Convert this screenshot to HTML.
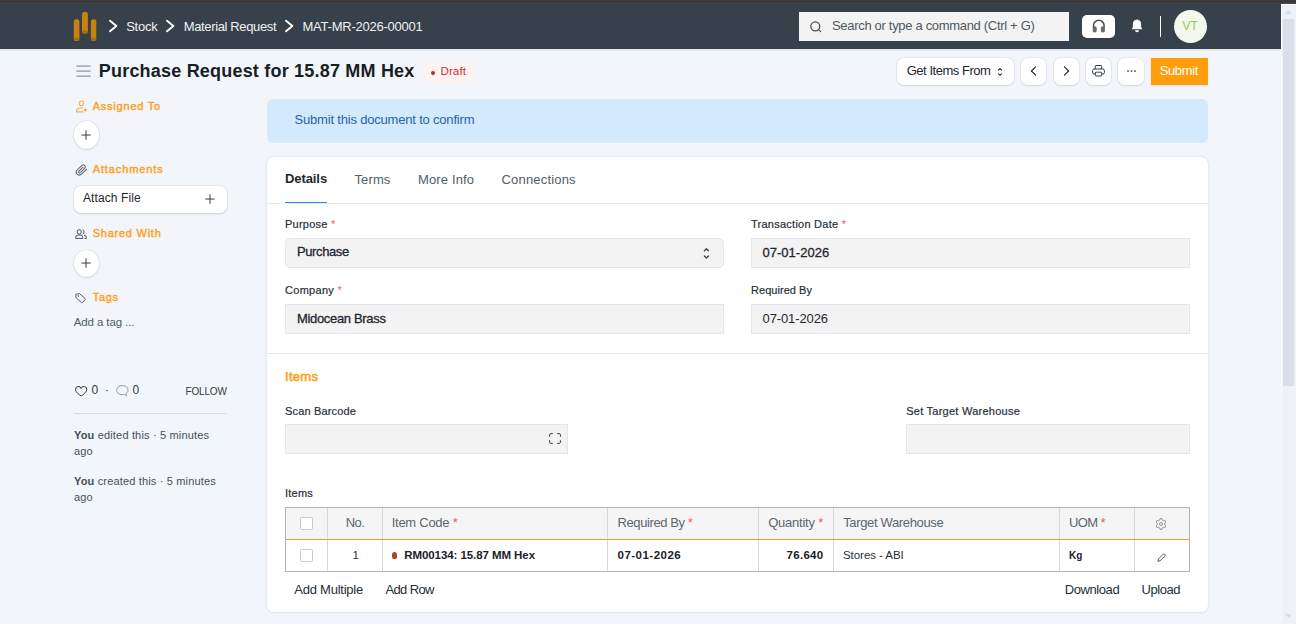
<!DOCTYPE html>
<html lang="en">
<head>
<meta charset="utf-8">
<title>Purchase Request for 15.87 MM Hex - MAT-MR-2026-00001</title>
<style>
*{box-sizing:border-box;margin:0;padding:0}
html,body{width:1296px;height:624px;overflow:hidden}
body{position:relative;background:#f2f5fa;font-family:"Liberation Sans",sans-serif;font-size:13px;color:#1f272e;-webkit-font-smoothing:antialiased}
.abs,.t{position:absolute}
.t{white-space:nowrap;line-height:1;display:block}
svg{position:absolute;overflow:visible}
/* chrome */
#chrome{left:0;top:0;width:1296px;height:3px;background:#3b3b3b}
#chrome2{left:0;top:3px;width:1296px;height:1px;background:#454647}
/* navbar */
#nav{left:0;top:4px;width:1281px;height:45px;background:#36414c;box-shadow:0 1px 2px rgba(20,30,50,.10)}
#nav .t{color:#eef0f2;font-size:13px}
#search{left:799px;top:8px;width:270px;height:29px;background:#f3f3f3}
#search .t{color:#4f5861;font-size:13px}
#help{left:1082px;top:11px;width:33px;height:23px;background:#fff;border-radius:5px}
#vdiv{left:1160px;top:12px;width:1px;height:21px;background:#fff}
#avatar{left:1174px;top:6px;width:33px;height:33px;border-radius:50%;background:#f2f8ec}
#avatar .t{color:#8fcb5c;font-size:12.5px}
/* scrollbar */
#sb{left:1281px;top:4px;width:15px;height:620px;background:#eef1f6;border-left:1px solid #f8fafc;border-top:1px solid #fbfcfd}
#thumb{left:1283px;top:19px;width:11px;height:367px;background:#d9dfe8}
/* page head */
#title{left:98.8px;top:62px;font-size:18px;font-weight:700;color:#171e26}
#pill{left:422px;top:62px;width:53px;height:21px;border-radius:6px;background:#fff3f2}
#pill i{position:absolute;left:9px;top:9px;width:4px;height:4px;border-radius:50%;background:#c5261b}
#pill .t{color:#c93434;font-size:11.5px}
.btn{background:#fff;border-radius:7px;box-shadow:0 0 0 1px rgba(20,40,70,.05),0 1px 2px rgba(20,40,70,.09)}
#submit{left:1151px;top:58px;width:57px;height:27px;background:#ff9d0b;box-shadow:0 1px 2px rgba(0,0,0,.07)}
#submit .t{color:#fff;font-size:13px}
/* sidebar */
.sh{color:#ff9f1c;font-size:11px;font-weight:400;-webkit-text-stroke:.4px #ff9f1c}
.circ{width:25.6px;height:27.4px;border-radius:50%;background:#fff;box-shadow:0 0 0 .6px rgba(20,40,70,.10),0 1px 2.5px rgba(20,40,70,.10)}
#attach{left:74px;top:185.5px;width:152.5px;height:27px;background:#fff;border-radius:7px;box-shadow:0 0 0 1px rgba(20,40,70,.06),0 1px 2px rgba(20,40,70,.12)}
.side{font-size:12px;color:#333c45}
#e1,#e2{color:#46505a}
/* alert */
#alert{left:267px;top:99px;width:941px;height:43.5px;background:#d3e9fc;border-radius:6px}
#alert .t{color:#1e66ad;font-size:13px}
/* card */
#card{left:267px;top:157px;width:941px;height:455px;background:#fff;border-radius:7px;box-shadow:0 0 3px rgba(40,60,100,.13),0 1px 2px rgba(40,60,100,.04)}
.hl{height:1px;background:#e6ebf2}
.tab{font-size:13px;color:#525d68}
.lbl{font-size:11px;color:#272f38;-webkit-text-stroke:.2px #272f38}
.inp{background:#f3f3f3;border:1px solid #e1e6ef;height:30px}
.val{font-size:13px;color:#1f272e}
/* grid */
#grid{left:285px;top:507px;width:905px;height:65px;border:1px solid #b3b3b3;background:#fff}
#ghead{left:0;top:0;width:903px;height:32px;background:#f5f5f5}
#gline{left:0;top:31px;width:903px;height:1.3px;background:#ff9f1c}
.cb{width:13px;height:12.6px;background:#fff;border:1px solid #c6cbd2;border-radius:1.5px}
.vl{top:0;width:1px;height:63px;background:#d5dae1}
.gh{font-size:13px;color:#5c6670}
.gv{font-size:11.5px;color:#1a2129;font-weight:700}
.ga{font-size:13px;color:#272f38}
.req{color:#ec5b5f;-webkit-text-stroke:0}
.med{font-weight:400;-webkit-text-stroke:.3px currentColor}
</style>
</head>
<body>
<div id="chrome" class="abs"></div><div id="chrome2" class="abs"></div>

<header id="nav" class="abs">
  <svg id="logo" style="left:73px;top:7px" width="24" height="31" viewBox="0 0 24 31">
    <rect x="0.8" y="8.3" width="5.6" height="21.7" rx="2.6" fill="#c9820f"/>
    <rect x="9" y="0.8" width="5.9" height="22" rx="2.7" fill="#c9820f"/>
    <rect x="17.9" y="8.3" width="5.4" height="21.7" rx="2.6" fill="#c9820f"/>
    <ellipse cx="3.6" cy="28.300" rx="2.700" ry="1.750" fill="#a96b10"/>
    <ellipse cx="11.95" cy="21.100" rx="2.850" ry="1.750" fill="#a96b10"/>
    <ellipse cx="20.6" cy="28.300" rx="2.600" ry="1.750" fill="#a96b10"/>
  </svg>
  <svg style="left:109px;top:16px" width="9" height="12" viewBox="0 0 9 12"><path d="M1 .7 L7.4 6 L1 11.3" fill="none" stroke="#fff" stroke-width="1.85" stroke-linecap="round" stroke-linejoin="round"/></svg>
  <a class="t" id="bc1" style="letter-spacing:-0.24px;left:126.2px;top:16px">Stock</a>
  <svg style="left:166px;top:16px" width="9" height="12" viewBox="0 0 9 12"><path d="M1 .7 L7.4 6 L1 11.3" fill="none" stroke="#fff" stroke-width="1.85" stroke-linecap="round" stroke-linejoin="round"/></svg>
  <a class="t" id="bc2" style="letter-spacing:-0.357px;left:183.7px;top:16px">Material Request</a>
  <svg style="left:285px;top:16px" width="9" height="12" viewBox="0 0 9 12"><path d="M1 .7 L7.4 6 L1 11.3" fill="none" stroke="#fff" stroke-width="1.85" stroke-linecap="round" stroke-linejoin="round"/></svg>
  <a class="t" id="bc3" style="letter-spacing:-0.235px;left:302.5px;top:16px">MAT-MR-2026-00001</a>

  <div id="search" class="abs">
    <svg style="left:11px;top:8.5px" width="12" height="12" viewBox="0 0 12 12"><circle cx="5.3" cy="5.3" r="4.5" fill="none" stroke="#454d56" stroke-width="1.25"/><path d="M8.6 8.6 L10.6 10.6" stroke="#454d56" stroke-width="1.25" stroke-linecap="round"/></svg>
    <span class="t" id="stext" style="letter-spacing:-0.314px;left:33.0px;top:7px">Search or type a command (Ctrl + G)</span>
  </div>
  <div id="help" class="abs">
    <svg style="left:9.8px;top:3.6px" width="13.6" height="14" viewBox="0 0 13.6 14"><path d="M1.5 9 V6.600 a5.300 5.300 0 0 1 10.600 0 V9" fill="none" stroke="#4d4d4d" stroke-width="1.5"/><rect x=".7" y="7.300" width="4" height="6.200" rx="1.800" fill="#6a6a6a"/><rect x="8.900" y="7.300" width="4" height="6.200" rx="1.800" fill="#6a6a6a"/></svg>
  </div>
  <svg id="bell" style="left:1131px;top:15.1px" width="12" height="14" viewBox="0 0 12 14"><path d="M6 .4 C3.2 .4 1.9 2.6 1.9 5 V8 L.6 10.2 H11.4 L10.1 8 V5 C10.1 2.6 8.8 .4 6 .4 Z" fill="#fff"/><path d="M4 11.300 a2 1.900 0 0 0 4 0 Z" fill="#fff"/></svg>
  <div id="vdiv" class="abs"></div>
  <div id="avatar" class="abs"><span class="t" id="vt" style="letter-spacing:-0.3px;left:8.3px;top:10px">VT</span></div>
</header>

<div id="sb" class="abs"></div>
<div id="thumb" class="abs"></div>
<svg style="left:1285px;top:10px" width="7" height="4" viewBox="0 0 7 4"><path d="M0 4 L3.5 0 L7 4 Z" fill="#d6dce7"/></svg>
<svg style="left:1285px;top:614px" width="7" height="4" viewBox="0 0 7 4"><path d="M0 0 L3.5 4 L7 0 Z" fill="#d6dce7"/></svg>

<!-- page head -->
<svg style="left:75.5px;top:65px" width="15" height="12" viewBox="0 0 15 12"><path d="M.3 1 H14.7 M.3 6 H14.7 M.3 11 H14.7" stroke="#8d98a5" stroke-width="1.25"/></svg>
<h1 class="t" id="title" style="letter-spacing:0.2px">Purchase Request for 15.87 MM Hex</h1>
<div id="pill" class="abs"><i></i><span class="t" id="draft" style="letter-spacing:0.12px;left:18.5px;top:3.5px">Draft</span></div>

<div class="abs btn" style="left:897px;top:58px;width:117px;height:27px">
  <span class="t val" id="gif" style="letter-spacing:-0.464px;left:9.7px;top:6.0px">Get Items From</span>
  <svg style="left:100px;top:8.5px" width="6" height="10" viewBox="0 0 6 10"><path d="M1.5 3 L3 1.6 L4.5 3 M1.5 6.800 L3 8.200 L4.500 6.800" fill="none" stroke="#1f272e" stroke-width="1.1" stroke-linecap="round" stroke-linejoin="round"/></svg>
</div>
<div class="abs btn" style="left:1021px;top:58px;width:25px;height:27px"><svg style="left:9px;top:7.8px" width="7" height="10" viewBox="0 0 7 10"><path d="M5.6 .8 L1.4 5 L5.6 9.2" fill="none" stroke="#1f272e" stroke-width="1.15" stroke-linecap="round" stroke-linejoin="round"/></svg></div>
<div class="abs btn" style="left:1054px;top:58px;width:25px;height:27px"><svg style="left:9px;top:7.8px" width="7" height="10" viewBox="0 0 7 10"><path d="M1.4 .8 L5.6 5 L1.4 9.2" fill="none" stroke="#1f272e" stroke-width="1.15" stroke-linecap="round" stroke-linejoin="round"/></svg></div>
<div class="abs btn" style="left:1086px;top:58px;width:25px;height:27px"><svg style="left:6px;top:7px" width="13" height="12" viewBox="0 0 13 12"><path d="M3.3 4 V1.2 a.7 .7 0 0 1 .7-.7 H9 a.7 .7 0 0 1 .7 .7 V4" fill="none" stroke="#333c45" stroke-width="1"/><rect x=".6" y="4" width="11.8" height="5" rx="1.6" fill="none" stroke="#333c45" stroke-width="1"/><rect x="3.3" y="7.2" width="6.4" height="3.8" rx=".8" fill="#fff" stroke="#333c45" stroke-width="1"/></svg></div>
<div class="abs btn" style="left:1118px;top:58px;width:26px;height:27px"><svg style="left:8.5px;top:11.7px" width="9" height="2" viewBox="0 0 9 2"><circle cx="1" cy="1" r=".85" fill="#1f272e"/><circle cx="4.5" cy="1" r=".85" fill="#1f272e"/><circle cx="8" cy="1" r=".85" fill="#1f272e"/></svg></div>
<button id="submit" class="abs" style="border:0"><span class="t" id="subt" style="letter-spacing:-0.367px;left:8.7px;top:6.0px">Submit</span></button>

<!-- sidebar -->
<aside>
  <svg style="left:75.5px;top:100.5px" width="12" height="12" viewBox="0 0 12 12"><circle cx="5.4" cy="2.4" r="2.4" fill="none" stroke="#ff9f1c" stroke-width="1"/><path d="M.5 10.9 V10.200 a3.300 3.300 0 0 1 3.300 -3.300 H6.300 M.5 10.900 H6.900" fill="none" stroke="#ff9f1c" stroke-width="1" stroke-linecap="round"/><path d="M9.3 6.800 Q9.500 8.800 11.500 9 Q9.500 9.200 9.300 11.200 Q9.100 9.200 7.100 9 Q9.100 8.800 9.300 6.800 Z" fill="#ff9f1c"/></svg>
  <span class="t sh" id="s1" style="letter-spacing:0.781px;left:92.7px;top:100.5px">Assigned To</span>
  <div class="abs circ" style="left:73.7px;top:121.4px"><svg style="left:7.4px;top:8.7px" width="10" height="10" viewBox="0 0 10 10"><path d="M5 .3 V9.7 M.3 5 H9.7" stroke="#2a323a" stroke-width=".95"/></svg></div>

  <svg style="left:75px;top:163.800px" width="12.7" height="12.2" viewBox="0 0 12 12" preserveAspectRatio="none"><path d="M10.9 5.2 L6.1 10 a2.9 2.9 0 0 1 -4.1 -4.1 L6.6 1.3 a2 2 0 0 1 2.8 2.8 L4.9 8.6 a1 1 0 0 1 -1.4 -1.4 L7.6 3.1" fill="none" stroke="#5d6771" stroke-width="1" stroke-linecap="round"/></svg>
  <span class="t sh" id="s2" style="letter-spacing:0.882px;left:92.7px;top:163.5px">Attachments</span>
  <div id="attach" class="abs"><span class="t side" id="af" style="letter-spacing:0.1px;left:9.0px;top:6.5px;color:#1f272e">Attach File</span><svg style="left:131px;top:8.700px" width="10" height="10" viewBox="0 0 10 10"><path d="M5 .3 V9.700 M.3 5 H9.700" stroke="#2a323a" stroke-width=".95"/></svg></div>

  <svg style="left:75px;top:229px" width="12" height="10" viewBox="0 0 12 10"><path d="M4.2 .6 a2.1 2.3 0 0 1 0 4.6 a2.1 2.3 0 0 1 0 -4.6 Z M.6 9.4 V8.6 a2.6 2.6 0 0 1 2.6 -2.6 H5.2 a2.6 2.6 0 0 1 2.6 2.6 V9.4 Z" fill="none" stroke="#4a525b" stroke-width="1"/><path d="M7.6 .7 a2.1 2.3 0 0 1 0 4.4 M9 6.1 a2.6 2.6 0 0 1 2.4 2.5 V9.4 H9.6" fill="none" stroke="#4a525b" stroke-width="1"/></svg>
  <span class="t sh" id="s3" style="letter-spacing:0.755px;left:92.7px;top:227.5px">Shared With</span>
  <div class="abs circ" style="left:73.7px;top:249.5px"><svg style="left:7.4px;top:8.7px" width="10" height="10" viewBox="0 0 10 10"><path d="M5 .3 V9.7 M.3 5 H9.7" stroke="#2a323a" stroke-width=".95"/></svg></div>

  <svg style="left:75.3px;top:292.7px" width="11" height="10.200" viewBox="0 0 12 11" preserveAspectRatio="none"><path d="M.9 1.4 L4.9 .7 L11 6 a.9 .9 0 0 1 0 1.3 L8.2 10.2 a.9 .9 0 0 1 -1.3 0 L1 4.9 Z" fill="none" stroke="#4a525b" stroke-width="1" stroke-linejoin="round"/><circle cx="3.6" cy="3.3" r=".8" fill="#4a525b"/></svg>
  <span class="t sh" id="s4" style="letter-spacing:0.699px;left:92.7px;top:291.5px">Tags</span>
  <span class="t side" id="addtag" style="letter-spacing:-0.1px;left:73.7px;top:317px;color:#535d67;font-size:11.5px">Add a tag ...</span>

  <svg style="left:74.8px;top:385.6px" width="12.3" height="10.9" viewBox="0 0 13 12" preserveAspectRatio="none"><path d="M6.5 11 C2 7.8 .6 5.8 .6 3.8 a3 3 0 0 1 5.9 -1 a3 3 0 0 1 5.9 1 C12.4 5.8 11 7.800 6.500 11 Z" fill="none" stroke="#1f272e" stroke-width="1" stroke-linejoin="round"/></svg>
  <span class="t side" id="c0a" style="letter-spacing:0.5px;left:91.4px;top:384px">0</span>
  <span class="t side" id="dotsep" style="left:105px;top:384px">·</span>
  <svg style="left:116px;top:385.3px" width="12.2" height="11.6" viewBox="0 0 12 12" preserveAspectRatio="none"><path d="M6 .6 a5.4 4.7 0 0 0 0 9.4 a6 6 0 0 0 2.300 -.4 L10.300 11.300 L9.900 8.800 A5.200 4.600 0 0 0 6 .6 Z" fill="none" stroke="#8a949e" stroke-width=".9" stroke-linejoin="round"/></svg>
  <span class="t side" id="c0b" style="letter-spacing:0.4px;left:132.5px;top:384px">0</span>
  <span class="t" id="follow" style="letter-spacing:-0.183px;left:185.6px;top:386.5px;font-size:10px;color:#333c45">FOLLOW</span>
  <div class="abs hl" style="left:74px;top:413px;width:153px;background:#d9dee6"></div>
  <p class="t side" id="e1" style="letter-spacing:0.167px;left:74.0px;top:427px;line-height:16px;font-size:11px"><b>You</b> edited this · 5 minutes<br>ago</p>
  <p class="t side" id="e2" style="letter-spacing:0.161px;left:74.0px;top:473px;line-height:16px;font-size:11px"><b>You</b> created this · 5 minutes<br>ago</p>
</aside>

<!-- alert -->
<div id="alert" class="abs"><span class="t" id="alt" style="letter-spacing:-0.19px;left:27.5px;top:14.0px">Submit this document to confirm</span></div>

<!-- form card -->
<main id="card" class="abs"></main>
<div class="t tab" id="tb1" style="letter-spacing:-0.086px;left:285.0px;top:172px;font-weight:700;color:#1f272e">Details</div>
<div class="t tab" id="tb2" style="letter-spacing:0.12px;left:354.5px;top:173px">Terms</div>
<div class="t tab" id="tb3" style="letter-spacing:0.144px;left:418.0px;top:173px">More Info</div>
<div class="t tab" id="tb4" style="letter-spacing:0.182px;left:501.5px;top:173px">Connections</div>
<div class="abs" style="left:285px;top:202px;width:42px;height:1.5px;background:#2490ef"></div>
<div class="abs hl" style="left:267px;top:203px;width:941px"></div>

<label class="t lbl" id="l1" style="letter-spacing:0.245px;left:285.0px;top:219.0px">Purpose <span class="req">*</span></label>
<div class="abs inp" style="left:285px;top:238px;width:439px;border-radius:5px"><span class="t val med" id="v1" style="letter-spacing:-0.4px;left:11.0px;top:6.0px;font-size:13px">Purchase</span>
  <svg style="left:416.3px;top:8px" width="8" height="13" viewBox="0 0 8 13"><path d="M2.4 3.700 L4.400 1.700 L6.400 3.700 M2.400 9 L4.400 11 L6.400 9" fill="none" stroke="#3c4650" stroke-width="1.35" stroke-linecap="round" stroke-linejoin="round"/></svg></div>
<label class="t lbl" id="l2" style="letter-spacing:0.249px;left:751.0px;top:219.0px">Transaction Date <span class="req">*</span></label>
<div class="abs inp" style="left:751px;top:238px;width:439px"><span class="t val med" id="v2" style="letter-spacing:0.02px;left:10.5px;top:7.0px;font-size:13px">07-01-2026</span></div>

<label class="t lbl" id="l3" style="letter-spacing:0.289px;left:285.0px;top:285.0px">Company <span class="req">*</span></label>
<div class="abs inp" style="left:285px;top:304px;width:439px"><span class="t val med" id="v3" style="letter-spacing:-0.329px;left:11.0px;top:7.0px;font-size:13px">Midocean Brass</span></div>
<label class="t lbl" id="l4" style="letter-spacing:0.045px;left:751.0px;top:285.0px">Required By</label>
<div class="abs inp" style="left:751px;top:304px;width:439px"><span class="t val" id="v4" style="letter-spacing:-0.1px;left:10.5px;top:7.0px">07-01-2026</span></div>

<div class="abs hl" style="left:267px;top:353px;width:941px"></div>
<h2 class="t" id="sec" style="letter-spacing:0.3px;left:285.0px;top:370px;font-size:13px;font-weight:400;-webkit-text-stroke:.6px #ff9f1c;color:#ff9f1c">Items</h2>
<label class="t lbl" id="l5" style="letter-spacing:0.158px;left:285.0px;top:406.0px">Scan Barcode</label>
<div class="abs inp" style="left:285px;top:424px;width:283px">
  <svg style="left:263px;top:8px" width="12" height="11" viewBox="0 0 12 11"><path d="M.6 3.400 V1.800 a1.200 1.200 0 0 1 1.200 -1.200 H3.400 M8.600 .6 H10.200 a1.200 1.200 0 0 1 1.200 1.200 V3.400 M11.400 7.600 V9.200 a1.200 1.200 0 0 1 -1.200 1.200 H8.600 M3.400 10.400 H1.800 a1.200 1.200 0 0 1 -1.200 -1.200 V7.600" fill="none" stroke="#333c45" stroke-width="1" stroke-linecap="round"/></svg></div>
<label class="t lbl" id="l6" style="letter-spacing:0.249px;left:906.2px;top:406.0px">Set Target Warehouse</label>
<div class="abs inp" style="left:906px;top:424px;width:283.500px"></div>

<label class="t lbl" id="l7" style="letter-spacing:0.22px;left:285.0px;top:488.0px">Items</label>
<div id="grid" class="abs">
  <div id="ghead" class="abs"></div>
  <div class="abs vl" style="left:40.5px"></div><div class="abs vl" style="left:95.5px"></div><div class="abs vl" style="left:320.5px"></div><div class="abs vl" style="left:471.5px"></div><div class="abs vl" style="left:546.5px"></div><div class="abs vl" style="left:772.5px"></div><div class="abs vl" style="left:847.5px"></div>
  <div id="gline" class="abs"></div>
  <div class="abs cb" style="left:14px;top:9px"></div>
  <div class="abs cb" style="left:14px;top:41px"></div>
  <span class="t gh" id="h1" style="letter-spacing:-0.466px;left:59.7px;top:8.0px">No.</span>
  <span class="t gh" id="h2" style="letter-spacing:-0.263px;left:105.7px;top:8.0px">Item Code <span class="req">*</span></span>
  <span class="t gh" id="h3" style="letter-spacing:-0.4px;left:331.5px;top:8.0px">Required By <span class="req">*</span></span>
  <span class="t gh" id="h4" style="letter-spacing:-0.23px;left:482.2px;top:8.0px">Quantity <span class="req">*</span></span>
  <span class="t gh" id="h5" style="letter-spacing:-0.35px;left:557.2px;top:8.0px">Target Warehouse</span>
  <span class="t gh" id="h6" style="letter-spacing:-0.6px;left:783.0px;top:8.0px">UOM <span class="req">*</span></span>
  <svg style="left:868.6px;top:9.8px" width="12" height="12" viewBox="0 0 12 12"><circle cx="6" cy="6" r="1.500" fill="none" stroke="#6c7680" stroke-width=".75"/><path d="M5 .7 H7 L7.300 2.100 L8.500 2.800 L9.900 2.300 L10.900 4 L9.800 5 V7 L10.900 8 L9.900 9.700 L8.500 9.200 L7.300 9.900 L7 11.300 H5 L4.700 9.900 L3.500 9.200 L2.100 9.700 L1.100 8 L2.200 7 V5 L1.100 4 L2.100 2.300 L3.500 2.800 L4.700 2.100 Z" fill="none" stroke="#6c7680" stroke-width=".75" stroke-linejoin="round"/></svg>

  <span class="t ga" id="r1" style="left:66.500px;top:41.500px;font-size:11.5px">1</span>
  <i class="abs" style="left:105.8px;top:44.4px;width:5.6px;height:6.4px;border-radius:50%;background:#a5472a"></i>
  <span class="t gv" id="r2" style="letter-spacing:-0.072px;left:118.2px;top:42px">RM00134: 15.87 MM Hex</span>
  <span class="t gv" id="r3" style="letter-spacing:0.49px;left:331.5px;top:42px">07-01-2026</span>
  <span class="t gv" id="r4" style="letter-spacing:0.3px;left:500.5px;top:42px">76.640</span>
  <span class="t ga" id="r5" style="letter-spacing:-0.05px;left:557.0px;top:42px;font-size:11.5px">Stores - ABI</span>
  <span class="t gv" id="r6" style="left:783px;top:42px;transform:scaleX(.87);transform-origin:0 0">Kg</span>
  <svg style="left:870.6px;top:44.6px" width="9.2" height="9.2" viewBox="0 0 10 10"><path d="M1 9 L1.500 6.600 L6.800 1.300 a1 1 0 0 1 1.400 0 L8.700 1.800 a1 1 0 0 1 0 1.400 L3.400 8.500 Z" fill="none" stroke="#333c45" stroke-width=".9" stroke-linejoin="round"/></svg>
</div>
<span class="t ga" id="a1" style="letter-spacing:-0.225px;left:294.2px;top:583px">Add Multiple</span>
<span class="t ga" id="a2" style="letter-spacing:-0.643px;left:385.5px;top:583px">Add Row</span>
<span class="t ga" id="a3" style="letter-spacing:-0.412px;left:1064.7px;top:583px">Download</span>
<span class="t ga" id="a4" style="letter-spacing:-0.45px;left:1141.5px;top:583px">Upload</span>
</body>
</html>
